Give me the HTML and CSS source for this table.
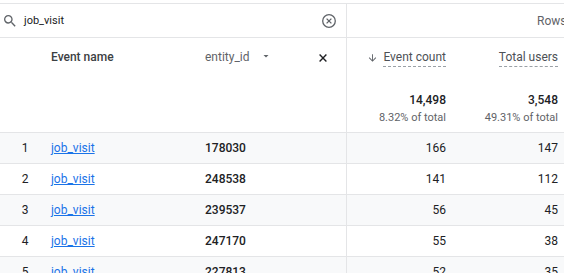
FILE: index.html
```html
<!DOCTYPE html>
<html lang="en">
<head>
<meta charset="utf-8">
<title>Events table</title>
<link rel="stylesheet" href="styles.css">
</head>
<body>
<div class="table">
  <div class="search-row">
    <div class="search-left">
      <svg class="search-icon" viewBox="0 0 24 24" width="16" height="16"><path fill="#5f6368" d="M15.5 14h-.79l-.28-.27A6.471 6.471 0 0 0 16 9.5 6.5 6.5 0 1 0 9.5 16c1.61 0 3.09-.59 4.23-1.57l.27.28v.79l5 4.99L20.49 19l-4.99-5zm-6 0C7.01 14 5 11.99 5 9.5S7.01 5 9.5 5 14 7.01 14 9.5 11.99 14 9.5 14z"/></svg>
      <span class="query">job_visit</span>
      <svg class="clear-icon" viewBox="0 0 16 16" width="16" height="16"><circle cx="8" cy="8" r="6.3" fill="none" stroke="#5f6368" stroke-width="1.3"/><path d="M5.6 5.6l4.8 4.8M10.4 5.6l-4.8 4.8" stroke="#5f6368" stroke-width="1.3"/></svg>
    </div>
    <div class="search-right"><span class="rows-label">Rows per page:</span></div>
  </div>

  <div class="grid-row head">
    <div class="cell"></div>
    <div class="cell name"><span class="head-label">Event name</span></div>
    <div class="cell dim">
      <span class="dim-label">entity_id</span>
      <svg class="drop" viewBox="0 0 10 10" width="10" height="10"><path d="M2.5 4h5L5 6.6z" fill="#5f6368"/></svg>
      <svg class="close" viewBox="0 0 12 12" width="12" height="12"><path d="M2.6 2.6l6.8 6.8M9.4 2.6l-6.8 6.8" stroke="#202124" stroke-width="1.4"/></svg>
    </div>
    <div class="cell metric first">
      <div class="metric-head">
        <svg class="sort" viewBox="0 0 24 24" width="11" height="12"><path fill="#5f6368" d="M20 12l-1.41-1.41L13 16.17V4h-2v12.17l-5.58-5.59L4 12l8 8 8-8z"/></svg>
        <span class="metric-label">Event count</span>
      </div>
      <div class="total">14,498</div>
      <div class="share">8.32% of total</div>
    </div>
    <div class="cell metric last">
      <div class="metric-head"><span class="metric-label">Total users</span></div>
      <div class="total">3,548</div>
      <div class="share">49.31% of total</div>
    </div>
  </div>

  <div class="grid-row data shaded">
    <div class="cell num">1</div>
    <div class="cell name"><a class="link" href="#">job_visit</a></div>
    <div class="cell dim id">178030</div>
    <div class="cell metric first">166</div>
    <div class="cell metric last">147</div>
  </div>
  <div class="grid-row data">
    <div class="cell num">2</div>
    <div class="cell name"><a class="link" href="#">job_visit</a></div>
    <div class="cell dim id">248538</div>
    <div class="cell metric first">141</div>
    <div class="cell metric last">112</div>
  </div>
  <div class="grid-row data shaded">
    <div class="cell num">3</div>
    <div class="cell name"><a class="link" href="#">job_visit</a></div>
    <div class="cell dim id">239537</div>
    <div class="cell metric first">56</div>
    <div class="cell metric last">45</div>
  </div>
  <div class="grid-row data">
    <div class="cell num">4</div>
    <div class="cell name"><a class="link" href="#">job_visit</a></div>
    <div class="cell dim id">247170</div>
    <div class="cell metric first">55</div>
    <div class="cell metric last">38</div>
  </div>
  <div class="grid-row data shaded">
    <div class="cell num">5</div>
    <div class="cell name"><a class="link" href="#">job_visit</a></div>
    <div class="cell dim id">227813</div>
    <div class="cell metric first">52</div>
    <div class="cell metric last">35</div>
  </div>
</div>
</body>
</html>
```

FILE: styles.css
```css
* { box-sizing: border-box; }

html, body {
  margin: 0;
  padding: 0;
  background: #ffffff;
  overflow: hidden;
}

body {
  width: 564px;
  height: 273px;
  font-family: Roboto, "Liberation Sans", Arial, sans-serif;
  font-size: 12px;
  color: #3c4043;
}

.table {
  margin-top: 3px;
  border-top: 1px solid #e4e5e7;
  width: 564px;
}

.search-row {
  display: grid;
  grid-template-columns: 346px 218px;
  height: 34px;
  border-bottom: 1px solid #e4e5e7;
}

.search-left {
  display: flex;
  align-items: center;
  padding-left: 2px;
}

.search-icon { flex: none; }

.query {
  margin-left: 6px;
  font-size: 11px;
  color: #202124;
}

.clear-icon {
  margin-left: auto;
  margin-right: 9px;
  flex: none;
}

.search-right {
  border-left: 1px solid #e4e5e7;
  display: flex;
  align-items: center;
  padding-left: 190px;
  overflow: hidden;
  white-space: nowrap;
}

.rows-label {
  font-size: 12px;
  color: #5f6368;
}

.grid-row {
  display: grid;
  grid-template-columns: 50px 155px 141px 101px 117px;
  border-bottom: 1px solid #e4e5e7;
}

.head {
  height: 95px;
}

.head .cell {
  padding-top: 11px;
}

.head-label {
  display: inline-block;
  line-height: 16px;
  font-weight: 500;
  color: #3c4043;
  padding-left: 1px;
}

.head .dim {
  display: flex;
  align-items: flex-start;
  line-height: 16px;
}

.dim-label {
  color: #5f6368;
}

.drop {
  margin-left: 11px;
  margin-top: 2px;
  flex: none;
}

.close {
  margin-left: auto;
  margin-right: 17px;
  margin-top: 3px;
  flex: none;
}

.metric {
  text-align: right;
}

.metric.first {
  border-left: 1px solid #e4e5e7;
  padding-right: 1px;
}

.metric.last {
  padding-right: 6px;
}

.metric-head {
  display: flex;
  justify-content: flex-end;
  align-items: flex-start;
  line-height: 16px;
}

.sort {
  margin-right: 5px;
  margin-top: 3px;
}

.metric-label {
  color: #4d5156;
  border-bottom: 1px dashed #9aa0a6;
  padding-bottom: 1px;
}

.total {
  margin-top: 25px;
  line-height: 16px;
  font-weight: 500;
  color: #202124;
}

.share {
  margin-top: 3px;
  line-height: 14px;
  font-size: 11px;
  color: #5f6368;
}

.data {
  height: 31px;
  align-items: center;
}

.data .cell {
  height: 30px;
  display: flex;
  align-items: center;
}

.data .num {
  justify-content: center;
  color: #202124;
}

.data .name {
  padding-left: 1px;
}

.data .metric {
  justify-content: flex-end;
  color: #202124;
}

.shaded {
  background: #f8f9fa;
}

.link {
  color: #1a73e8;
  text-decoration: underline;
  text-underline-offset: 1px;
}

.id {
  font-weight: 500;
  color: #202124;
}
```
